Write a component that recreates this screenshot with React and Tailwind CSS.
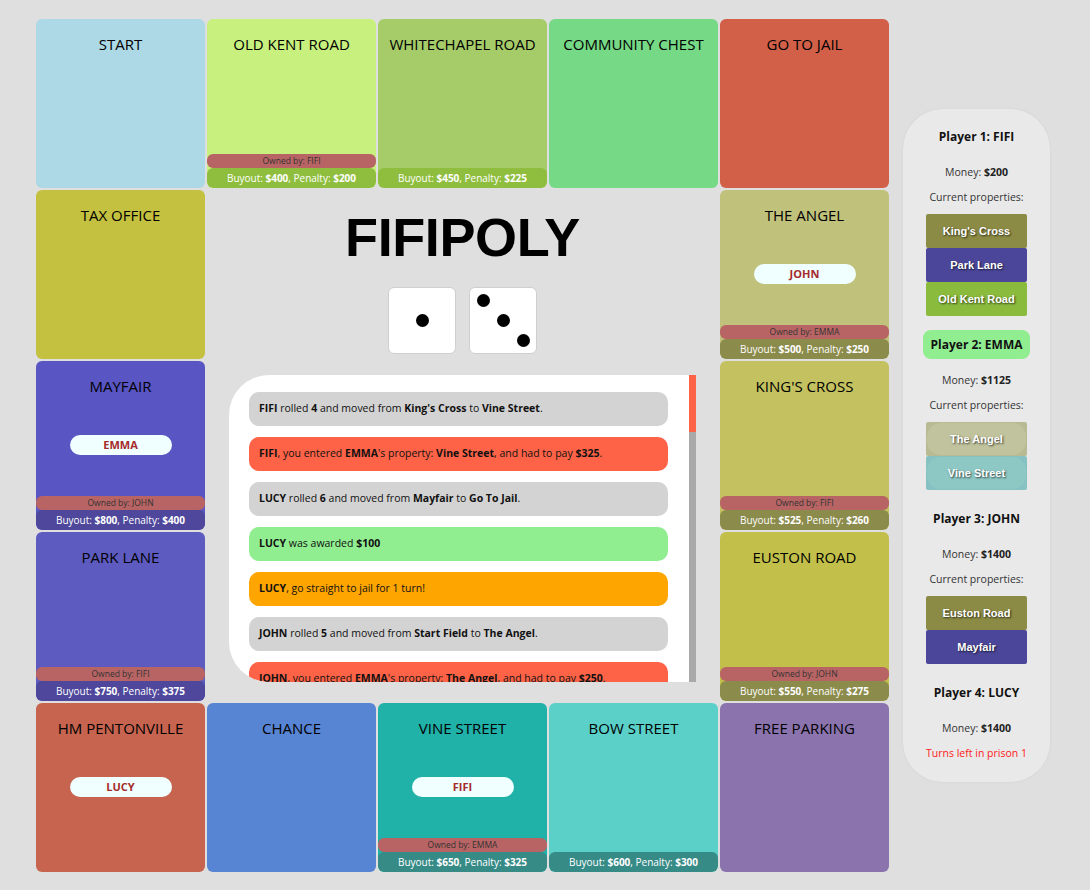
import React from 'react';

const UI_FONT = "font-['Open_Sans',sans-serif]";

// board fields in grid order (center block is placed after TAX OFFICE)
const cells = [
  { name: 'START', bg: 'bg-[#add8e6]' },
  { name: 'OLD KENT ROAD', bg: 'bg-[#c8f07f]', owner: 'FIFI', buyout: 400, penalty: 200, bar: 'bg-[#8fbe3f]' },
  { name: 'WHITECHAPEL ROAD', bg: 'bg-[#a6cc6a]', buyout: 450, penalty: 225, bar: 'bg-[#8fbe3f]' },
  { name: 'COMMUNITY CHEST', bg: 'bg-[#76d985]' },
  { name: 'GO TO JAIL', bg: 'bg-[#d26048]' },
  { name: 'TAX OFFICE', bg: 'bg-[#c3c13f]' },
  { center: true },
  { name: 'THE ANGEL', bg: 'bg-[#c0c27c]', token: 'JOHN', owner: 'EMMA', buyout: 500, penalty: 250, bar: 'bg-[#8b8b4b]' },
  { name: 'MAYFAIR', bg: 'bg-[#5955c3]', token: 'EMMA', owner: 'JOHN', buyout: 800, penalty: 400, bar: 'bg-[#4e479b]' },
  { name: "KING'S CROSS", bg: 'bg-[#c3c160]', owner: 'FIFI', buyout: 525, penalty: 260, bar: 'bg-[#8b8b4b]' },
  { name: 'PARK LANE', bg: 'bg-[#5d5bbf]', owner: 'FIFI', buyout: 750, penalty: 375, bar: 'bg-[#4e479b]' },
  { name: 'EUSTON ROAD', bg: 'bg-[#c2c04b]', owner: 'JOHN', buyout: 550, penalty: 275, bar: 'bg-[#8b8b4b]' },
  { name: 'HM PENTONVILLE', bg: 'bg-[#c76450]', token: 'LUCY' },
  { name: 'CHANCE', bg: 'bg-[#5784d3]' },
  { name: 'VINE STREET', bg: 'bg-[#20b1a8]', token: 'FIFI', owner: 'EMMA', buyout: 650, penalty: 325, bar: 'bg-[#378b87]' },
  { name: 'BOW STREET', bg: 'bg-[#5ad0c9]', buyout: 600, penalty: 300, bar: 'bg-[#378b87]' },
  { name: 'FREE PARKING', bg: 'bg-[#8b74ae]' },
];

const LOG_COLORS = {
  move: 'bg-[#d3d3d3]',
  pay: 'bg-[#ff6347]',
  award: 'bg-[#90ee90]',
  jail: 'bg-[#ffa500]',
};

const log = [
  ['move', "**FIFI** rolled **4** and moved from **King's Cross** to **Vine Street**."],
  ['pay', "**FIFI**, you entered **EMMA**'s property: **Vine Street**, and had to pay **$325**."],
  ['move', '**LUCY** rolled **6** and moved from **Mayfair** to **Go To Jail**.'],
  ['award', '**LUCY** was awarded **$100**'],
  ['jail', '**LUCY**, go straight to jail for 1 turn!'],
  ['move', '**JOHN** rolled **5** and moved from **Start Field** to **The Angel**.'],
  ['pay', "**JOHN**, you entered **EMMA**'s property: **The Angel**, and had to pay **$250**."],
  ['move', '**EMMA** rolled **3** and moved from **Chance** to **Vine Street**.'],
];

const players = [
  {
    title: 'Player 1: FIFI',
    money: 200,
    props: [
      { name: "King's Cross", bg: 'bg-[#8b8b46]' },
      { name: 'Park Lane', bg: 'bg-[#4b4699]' },
      { name: 'Old Kent Road', bg: 'bg-[#8abb3d]' },
    ],
  },
  {
    title: 'Player 2: EMMA',
    active: true,
    money: 1125,
    props: [
      { name: 'The Angel', bg: 'bg-[#b7ba93]', inner: 'bg-[#c0c39e]' },
      { name: 'Vine Street', bg: 'bg-[#86c2c2]', inner: 'bg-[#8ec8c5]' },
    ],
  },
  {
    title: 'Player 3: JOHN',
    money: 1400,
    props: [
      { name: 'Euston Road', bg: 'bg-[#8b8b46]' },
      { name: 'Mayfair', bg: 'bg-[#4b4699]' },
    ],
  },
  { title: 'Player 4: LUCY', money: 1400, prison: 1 },
];

const Rich = ({ text }) =>
  text.split('**').map((part, i) => (i % 2 ? <b key={i}>{part}</b> : <span key={i}>{part}</span>));

const Cell = ({ cell }) => (
  <div className={`${cell.bg} rounded-[6px] flex flex-col items-center overflow-hidden`}>
    <div className="pt-[13px] text-[15px] leading-6 font-medium text-black">{cell.name}</div>
    <div className="flex-1 w-full flex justify-center">
      {cell.token && (
        <div className="mt-[37px] w-[102px] h-[20px] rounded-full bg-[#f0ffff] flex items-center justify-center text-[11px] font-bold text-[#a52a2a]">
          {cell.token}
        </div>
      )}
    </div>
    {cell.owner && (
      <div className="w-full h-[14px] rounded-[6px] bg-[#b96464] flex items-center justify-center text-[8.5px] text-[#333]">
        Owned by: {cell.owner}
      </div>
    )}
    {cell.buyout && (
      <div className={`w-full h-[20px] rounded-[6px] ${cell.bar} flex items-center justify-center text-[10px] text-white whitespace-nowrap`}>
        Buyout:&nbsp;<b>${cell.buyout}</b>, Penalty:&nbsp;<b>${cell.penalty}</b>
      </div>
    )}
  </div>
);

const Pip = ({ show }) => (
  <div className={`w-[13px] h-[13px] rounded-full ${show ? 'bg-black' : ''}`} />
);

const Die = ({ pips }) => (
  <div className="w-[68px] h-[67px] bg-white rounded-[6px] border border-[#cfcfcf] p-[3px] grid grid-cols-3 grid-rows-3 place-items-center">
    {Array.from({ length: 9 }).map((_, i) => (
      <Pip key={i} show={pips.includes(i)} />
    ))}
  </div>
);

const Center = () => (
  <div className="col-span-3 row-span-3 flex flex-col items-center">
    <h1 className="mt-[20px] font-['Liberation_Sans',Arial,sans-serif] font-bold text-[54px] leading-none tracking-[-0.4px] text-black">
      FIFIPOLY
    </h1>
    <div className="mt-[23px] flex gap-[13px]">
      <Die pips={[4]} />
      <Die pips={[0, 4, 8]} />
    </div>
    {/* game log with its scroll track */}
    <div className="mt-[21px] self-start ml-[22px] w-[467px] h-[307px] bg-white rounded-l-[40px] flex overflow-hidden">
      <div className="flex-1 overflow-hidden pt-[17px] pl-[20px] pr-[21px] flex flex-col gap-[11px]">
        {log.map(([kind, text], i) => (
          <div key={i} className={`${LOG_COLORS[kind]} h-[34px] shrink-0 rounded-[10px] px-[10px] flex items-center text-[10.5px] text-[#111] whitespace-nowrap overflow-hidden`}>
            <div><Rich text={text} /></div>
          </div>
        ))}
      </div>
      <div className="w-[7px] h-full bg-[#a9a9a9]">
        <div className="h-[57px] bg-[#ff6347]" />
      </div>
    </div>
  </div>
);

const PropItem = ({ prop }) => (
  <div className={`w-[101px] h-[34px] ${prop.bg} rounded-[2px] flex items-center justify-center p-[1px]`}>
    <div className={`w-full h-full flex items-center justify-center ${prop.inner ? `${prop.inner} rounded-[14px]` : ''} font-['Liberation_Sans',Arial,sans-serif] font-bold text-[11px] text-white [text-shadow:1px_1px_2px_rgba(0,0,0,0.7)]`}>
      {prop.name}
    </div>
  </div>
);

const PlayerPanel = () => (
  <div className="w-[147px] rounded-[40px] bg-[#e9e9e9] pt-[13px] pb-[21px] flex flex-col items-center shadow-[0_0_3px_rgba(0,0,0,0.06)]">
    {players.map((p, i) => (
      <div key={i} className="flex flex-col items-center">
        <div className={`h-[29px] flex items-center justify-center rounded-[8px] text-[12px] font-bold text-[#111] whitespace-nowrap ${p.active ? 'bg-[#90ee90] w-[107px]' : ''}`}>
          {p.title}
        </div>
        <div className="mt-[13px] h-[16px] leading-4 text-[10.5px] text-[#333]">
          Money: <b className="text-[#222]">${p.money}</b>
        </div>
        {p.props && (
          <>
            <div className="mt-[9px] h-[16px] leading-4 text-[10.5px] text-[#333]">Current properties:</div>
            <div className="mt-[9px] mb-[14px] flex flex-col">
              {p.props.map((prop) => (
                <PropItem key={prop.name} prop={prop} />
              ))}
            </div>
          </>
        )}
        {p.prison && (
          <div className="mt-[9px] h-[16px] leading-4 text-[10.5px] text-[#ff2020]">Turns left in prison {p.prison}</div>
        )}
      </div>
    ))}
  </div>
);

export default function App() {
  return (
    <div className={`min-h-screen bg-[#dfdfdf] ${UI_FONT}`}>
      <div className="pl-[36px] pt-[19px] flex items-center gap-[14px]">
        <div className="grid grid-cols-[repeat(5,169px)] grid-rows-[repeat(5,169px)] gap-[2px]">
          {cells.map((c, i) => (c.center ? <Center key={i} /> : <Cell key={i} cell={c} />))}
        </div>
        <PlayerPanel />
      </div>
    </div>
  );
}
